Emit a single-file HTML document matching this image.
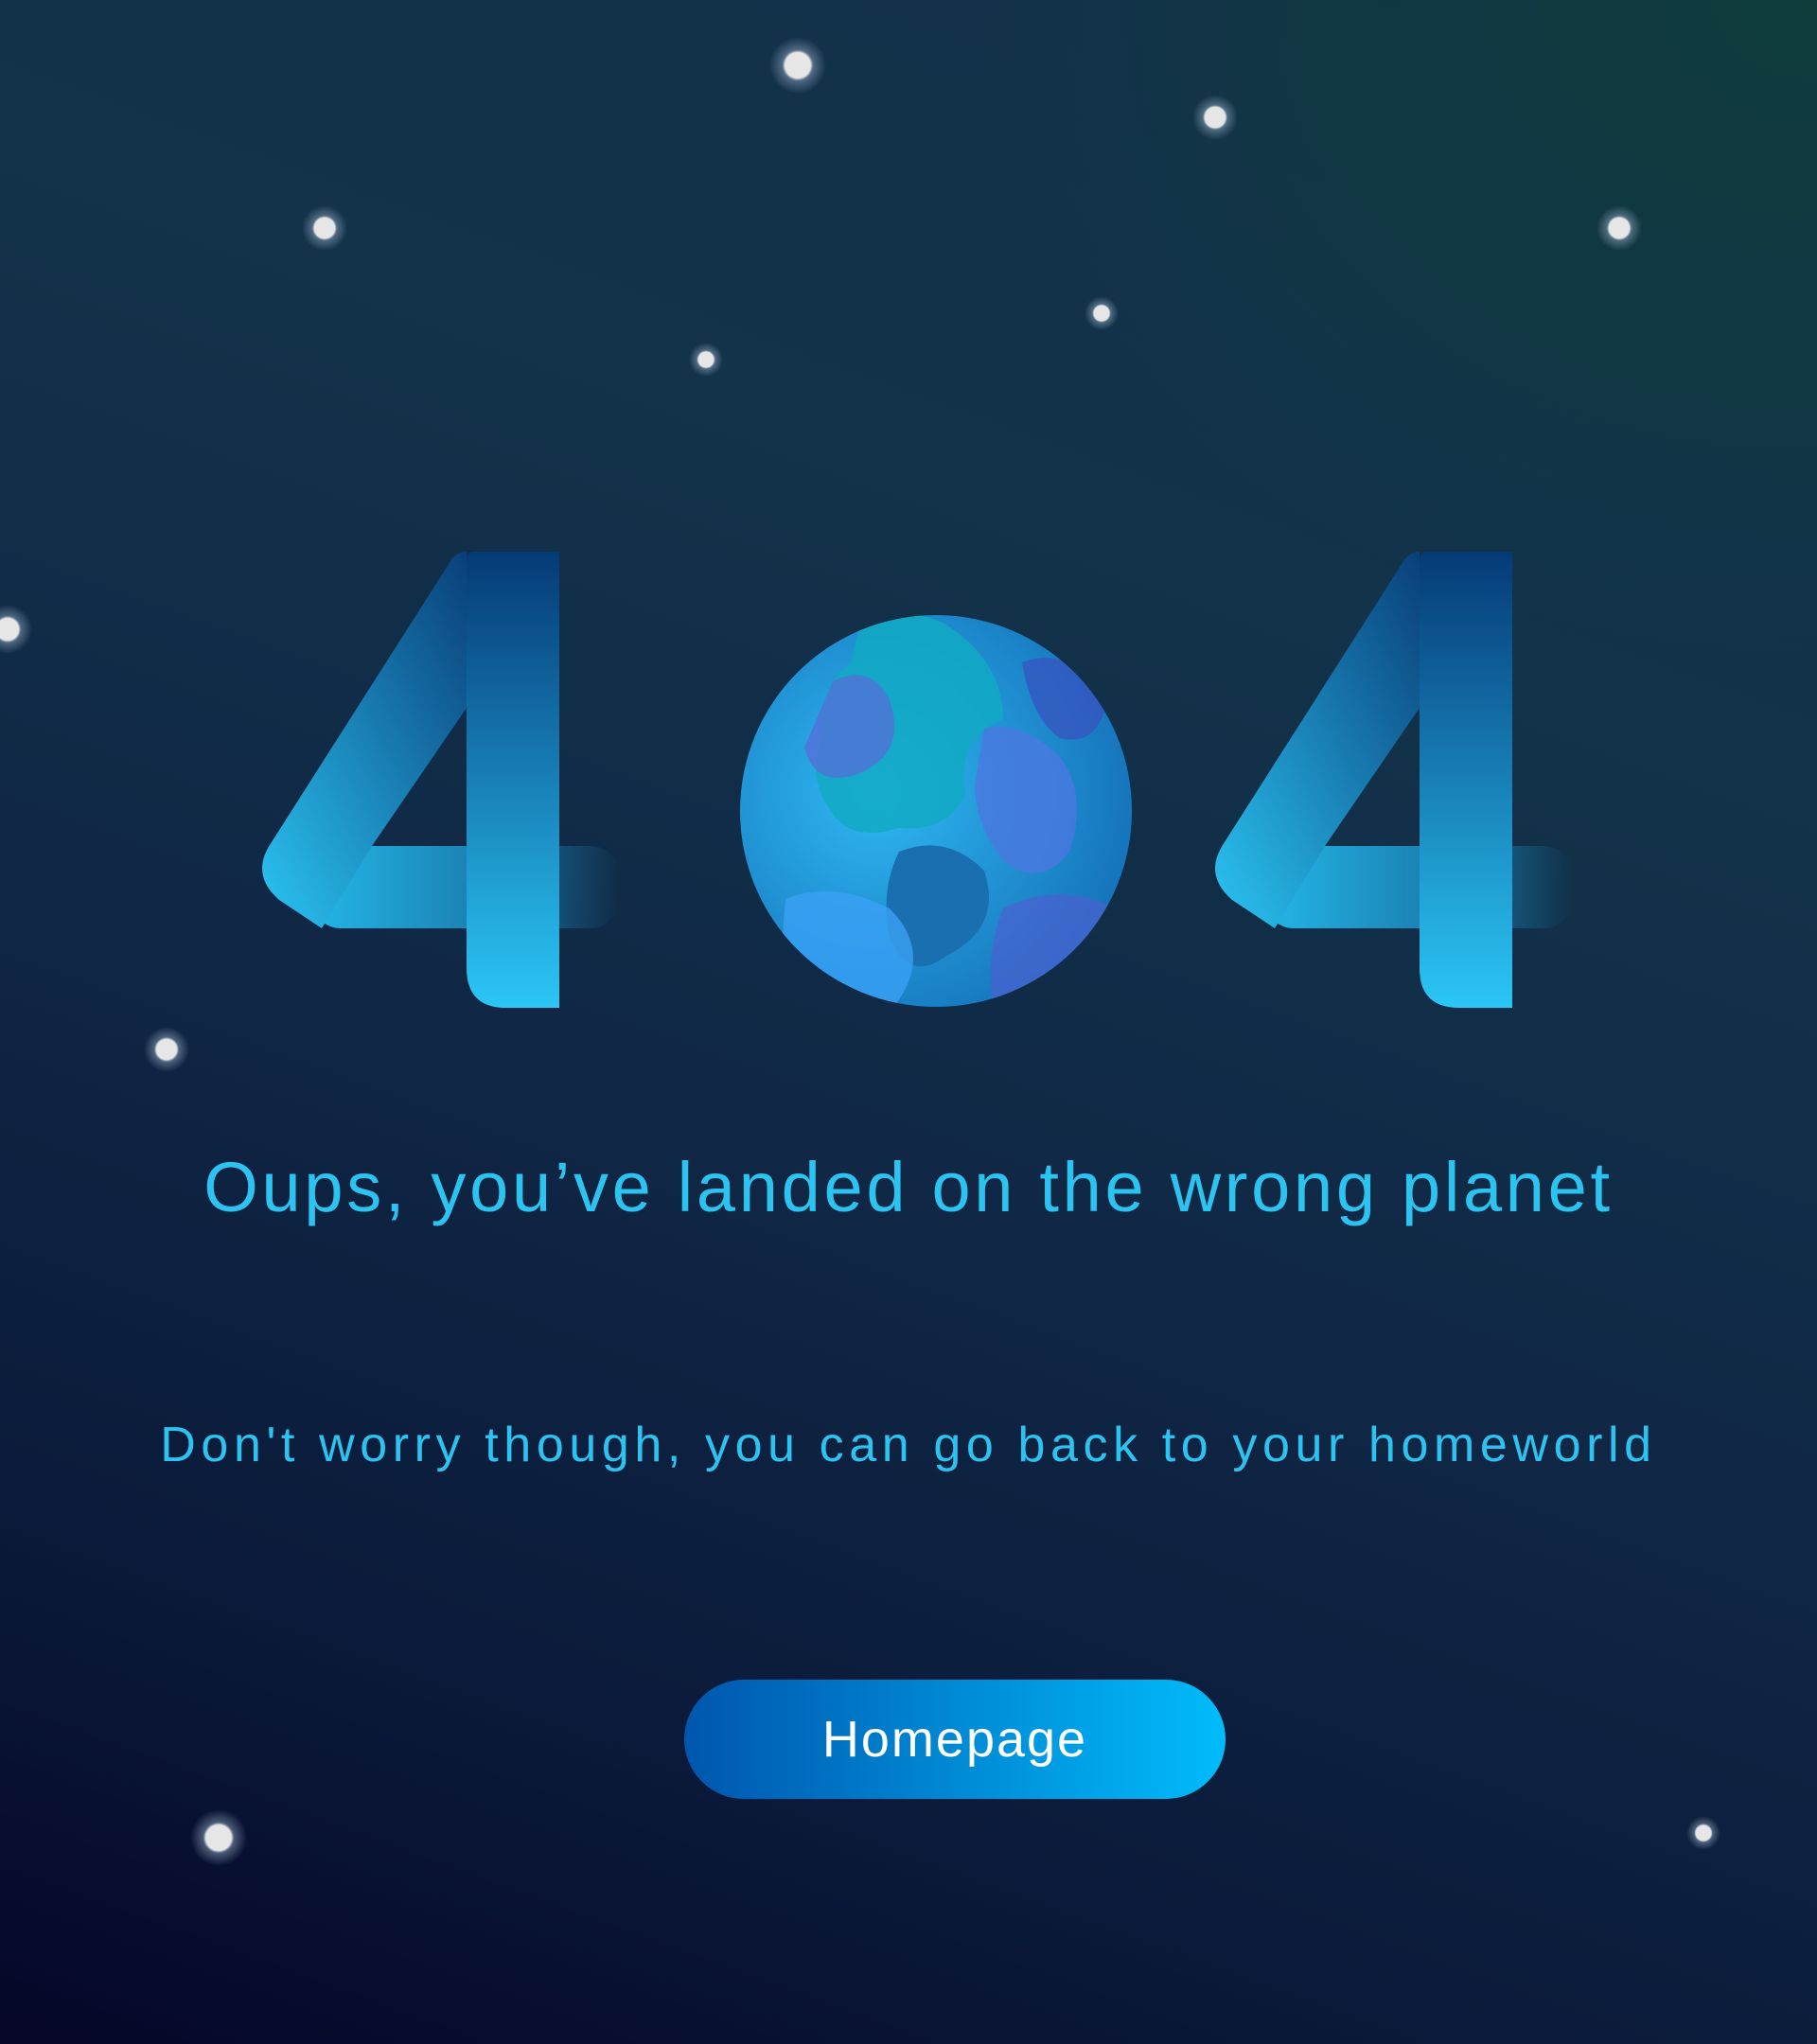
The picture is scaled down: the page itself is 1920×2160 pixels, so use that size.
<!DOCTYPE html>
<html><head><meta charset="utf-8"><style>
html,body{margin:0;padding:0}
body{width:1920px;height:2160px;overflow:hidden;position:relative;
background:radial-gradient(ellipse 900px 700px at 1920px 0px,#0f3d3c 0%,rgba(15,61,60,0) 100%),linear-gradient(200deg,#13304a 0%,#12334a 30%,#102846 55%,#0b1a3a 80%,#050628 100%);
font-family:"Liberation Sans",sans-serif}
.t1{position:absolute;left:0;width:1920px;top:1212px;text-align:center;color:#2cc3f0;font-size:74px;letter-spacing:3.7px}
.t2{position:absolute;left:0;width:1920px;top:1497px;text-align:center;color:#2cc3f0;font-size:52px;letter-spacing:5.6px}
.btn{position:absolute;left:723px;top:1775px;width:572px;height:126px;border-radius:63px;background:linear-gradient(90deg,#0056ad,#00bcfb);color:#fff;font-size:54px;line-height:126px;text-align:center;letter-spacing:2px}
</style></head><body>
<svg width="1920" height="2160" style="position:absolute;left:0;top:0">
<defs>
<radialGradient id="st"><stop offset="0" stop-color="#e6e6e6"/><stop offset="0.45" stop-color="#e6e6e6"/><stop offset="0.55" stop-color="#8aa0b8" stop-opacity="0.5"/><stop offset="1" stop-color="#8aa0b8" stop-opacity="0"/></radialGradient>
<linearGradient id="bar" x1="0" y1="0" x2="0" y2="1"><stop offset="0" stop-color="#053a76"/><stop offset="0.45" stop-color="#1678b0"/><stop offset="1" stop-color="#2bc6f5"/></linearGradient>
<linearGradient id="diag" x1="0" y1="1" x2="1" y2="0"><stop offset="0" stop-color="#2ac4f2"/><stop offset="1" stop-color="#0a3f7a"/></linearGradient>
<linearGradient id="hor" x1="0" y1="0" x2="1" y2="0"><stop offset="0" stop-color="#23b6e8"/><stop offset="0.55" stop-color="#1a7fb0"/><stop offset="1" stop-color="#1a7fb0" stop-opacity="0"/></linearGradient>
<radialGradient id="globe" cx="0.35" cy="0.45" r="0.7"><stop offset="0" stop-color="#2fb8f2"/><stop offset="1" stop-color="#1470b8"/></radialGradient>
<clipPath id="gc"><circle cx="989" cy="857" r="207"/></clipPath>
</defs>
<g fill="url(#st)">
<circle cx="843" cy="69" r="30"/><circle cx="1284" cy="124" r="24"/><circle cx="343" cy="241" r="24"/>
<circle cx="1711" cy="241" r="24"/><circle cx="1164" cy="331" r="18"/><circle cx="746" cy="380" r="18"/>
<circle cx="8" cy="665" r="26"/><circle cx="176" cy="1109" r="24"/><circle cx="231" cy="1942" r="30"/><circle cx="1800" cy="1937" r="18"/>
</g>
<g id="four">
<rect x="330" y="894" width="324" height="87" rx="30" fill="url(#hor)"/>
<path d="M493 583 L493 748 L393 894 L340 981 L295 951 Q265 925 285 893 L478 590 Q485 583 493 583 Z" fill="url(#diag)"/>
<path d="M500 583 L591 583 L591 1065 L535 1065 Q493 1065 493 1023 L493 595 Q493 583 500 583 Z" fill="url(#bar)"/>
</g>
<use href="#four" x="1007"/>
<circle cx="989" cy="857" r="207" fill="url(#globe)"/>
<g clip-path="url(#gc)">
<path d="M910 650 Q960 640 1000 660 Q1060 700 1060 760 Q1010 780 1020 840 Q1000 880 950 875 Q900 890 880 860 Q850 820 870 780 Q860 730 900 700 Z" fill="#12a9c4" opacity="0.85"/>
<path d="M880 720 Q920 700 940 740 Q960 800 900 820 Q860 830 850 790 Z" fill="#5a6ad8" opacity="0.7"/>
<path d="M1040 770 Q1080 760 1120 800 Q1150 840 1130 900 Q1100 940 1060 910 Q1030 870 1030 830 Z" fill="#4b78e0" opacity="0.8"/>
<path d="M1080 700 Q1130 680 1170 740 Q1160 790 1120 780 Q1090 760 1080 700 Z" fill="#3a50c0" opacity="0.7"/>
<path d="M950 900 Q1000 880 1040 920 Q1060 980 1000 1010 Q960 1040 940 990 Q930 940 950 900 Z" fill="#1a6fb0"/>
<path d="M830 950 Q880 930 940 960 Q990 1010 940 1070 L820 1070 Z" fill="#3aa0f5" opacity="0.8"/>
<path d="M1060 960 Q1120 930 1180 960 L1180 1070 L1050 1070 Q1040 1010 1060 960 Z" fill="#4b60d0" opacity="0.7"/>
<path d="M920 650 Q980 630 1060 660 L1060 640 L920 640 Z" fill="#5a5ad0" opacity="0.8"/>
</g>
</svg>
<div class="t1">Oups, you’ve landed on the wrong planet</div>
<div class="t2">Don't worry though, you can go back to your homeworld</div>
<div class="btn">Homepage</div>
</body></html>
